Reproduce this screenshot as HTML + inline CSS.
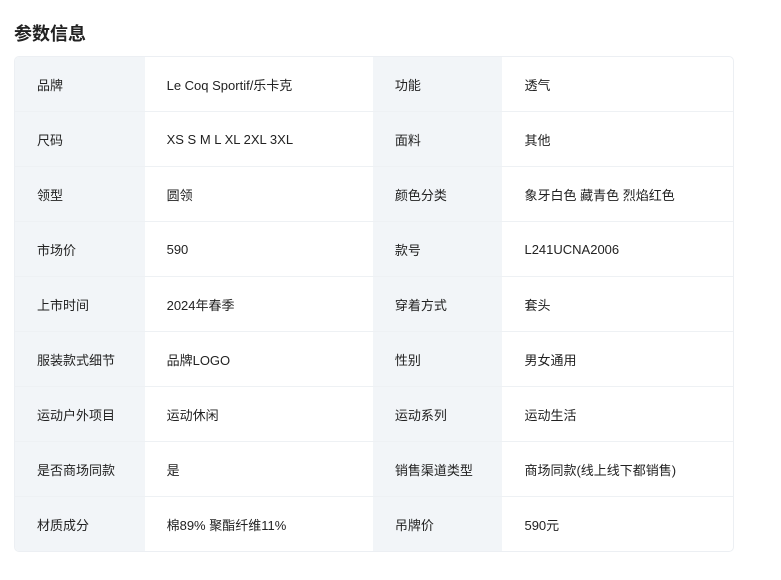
<!DOCTYPE html>
<html><head><meta charset="utf-8"><style>
body{margin:0;background:#fff;font-family:"Liberation Sans","Noto Sans CJK SC",sans-serif;color:#222;}
h2{position:absolute;left:14px;top:21px;margin:0;font-size:18px;font-weight:bold;color:#222;line-height:26px;}
table{position:absolute;left:14px;top:56px;width:720px;border-collapse:separate;border-spacing:0;border:1px solid #eceff3;border-radius:5px;overflow:hidden;}
td{height:55px;padding:0 0 0 22px;font-size:13px;border-top:1px solid #eef1f4;box-sizing:border-box;}
tr:first-child td{border-top:none;height:54px;}
td.l{background:#f2f5f8;width:130px;}
td.v{width:229px;}
td.v2{width:231px;}
</style></head><body>
<h2>参数信息</h2>
<table>
<tr><td class="l">品牌</td><td class="v">Le Coq Sportif/乐卡克</td><td class="l">功能</td><td class="v2">透气</td></tr>
<tr><td class="l">尺码</td><td class="v">XS S M L XL 2XL 3XL</td><td class="l">面料</td><td class="v2">其他</td></tr>
<tr><td class="l">领型</td><td class="v">圆领</td><td class="l">颜色分类</td><td class="v2">象牙白色 藏青色 烈焰红色</td></tr>
<tr><td class="l">市场价</td><td class="v">590</td><td class="l">款号</td><td class="v2">L241UCNA2006</td></tr>
<tr><td class="l">上市时间</td><td class="v">2024年春季</td><td class="l">穿着方式</td><td class="v2">套头</td></tr>
<tr><td class="l">服装款式细节</td><td class="v">品牌LOGO</td><td class="l">性别</td><td class="v2">男女通用</td></tr>
<tr><td class="l">运动户外项目</td><td class="v">运动休闲</td><td class="l">运动系列</td><td class="v2">运动生活</td></tr>
<tr><td class="l">是否商场同款</td><td class="v">是</td><td class="l">销售渠道类型</td><td class="v2">商场同款(线上线下都销售)</td></tr>
<tr><td class="l">材质成分</td><td class="v">棉89% 聚酯纤维11%</td><td class="l">吊牌价</td><td class="v2">590元</td></tr>
</table>
</body></html>
